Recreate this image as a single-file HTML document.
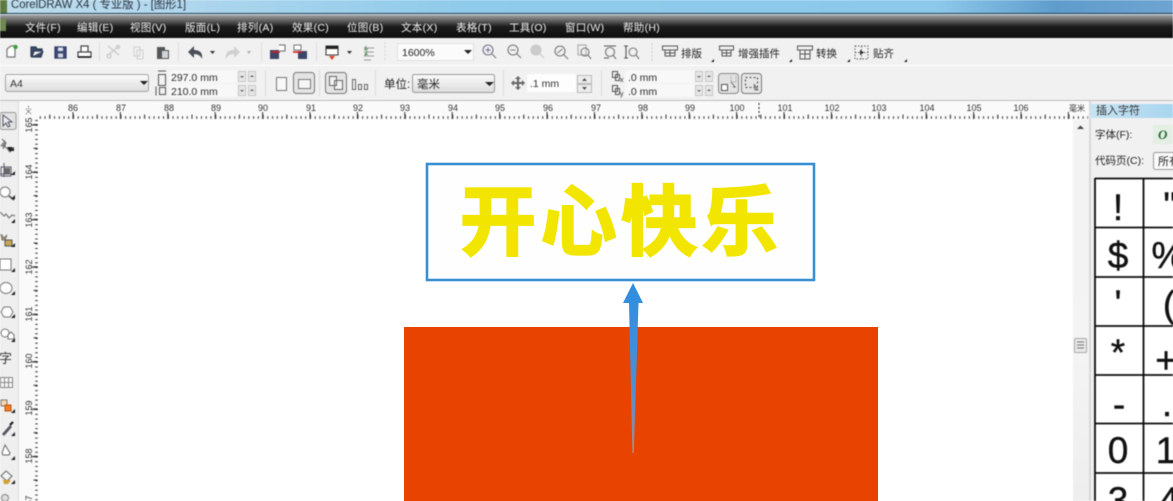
<!DOCTYPE html>
<html lang="zh"><head><meta charset="utf-8"><title>CorelDRAW X4</title>
<style>
html,body{margin:0;padding:0;width:1173px;height:501px;overflow:hidden;background:#fff}
svg{display:block}
text{font-family:"Liberation Sans","Noto Sans CJK SC",sans-serif}
.m{font-size:10.500px;letter-spacing:.3px;fill:#f0f0f0}
.t{font-size:11.500px;fill:#222}
.r{font-size:9px;fill:#333;text-anchor:middle}
.g{font-size:37px;fill:#111;text-anchor:middle;stroke:#111;stroke-width:.4px}
.chrome{filter:blur(.4px)}
</style></head><body>
<svg width="1173" height="501" viewBox="0 0 1173 501" xmlns="http://www.w3.org/2000/svg">
<defs>
<linearGradient id="title" x1="0" x2="1" y1="0" y2="0"><stop offset="0" stop-color="#bcdcea"/><stop offset=".12" stop-color="#b4d8ee"/><stop offset=".4" stop-color="#8fcbea"/><stop offset=".8" stop-color="#8cc8ea"/><stop offset=".9" stop-color="#5f9ccc"/><stop offset="1" stop-color="#6ea4d2"/></linearGradient>
<linearGradient id="menu" x1="0" x2="0" y1="0" y2="1"><stop offset="0" stop-color="#a2a2a2"/><stop offset=".5" stop-color="#1c1c1c"/><stop offset="1" stop-color="#0e0e0e"/></linearGradient>
<linearGradient id="combo" x1="0" x2="0" y1="0" y2="1"><stop offset="0" stop-color="#fbfbfb"/><stop offset=".5" stop-color="#ececec"/><stop offset="1" stop-color="#dcdcdc"/></linearGradient>
<linearGradient id="dock" x1="0" x2="1" y1="0" y2="0"><stop offset="0" stop-color="#c8e4f2"/><stop offset="1" stop-color="#a8d6f0"/></linearGradient>
<linearGradient id="arrow" x1="0" x2="0" y1="0" y2="1"><stop offset="0" stop-color="#2f8ee0"/><stop offset=".6" stop-color="#4a8fd8"/><stop offset="1" stop-color="#b08a80"/></linearGradient>
<linearGradient id="sb" x1="0" x2="0" y1="0" y2="1"><stop offset="0" stop-color="#f3f3f3"/><stop offset=".62" stop-color="#f4f4f4"/><stop offset="1" stop-color="#eeeeee"/></linearGradient>
</defs>

<rect width="1173" height="501" fill="#fff"/>

<g class="chrome">
<!-- title bar -->
<rect width="1173" height="13" fill="url(#title)"/>
<rect x="0" y="0" width="7" height="13" fill="#5e7a3e"/>
<text x="11" y="8" font-size="12" fill="#2a3440" textLength="175" lengthAdjust="spacingAndGlyphs">CorelDRAW X4 ( 专业版 ) - [图形1]</text>
<rect y="13" width="1173" height="1" fill="#22384a"/>
<rect y="14" width="1173" height="1" fill="#cfe4f0"/>

<!-- menu -->
<rect y="15" width="1173" height="23" fill="url(#menu)"/>
<rect x="0" y="19" width="6" height="12" fill="#6e8a50"/>
<text class="m" x="25" y="31">文件(F)</text>
<text class="m" x="77" y="31">编辑(E)</text>
<text class="m" x="130" y="31">视图(V)</text>
<text class="m" x="185" y="31">版面(L)</text>
<text class="m" x="237" y="31">排列(A)</text>
<text class="m" x="292" y="31">效果(C)</text>
<text class="m" x="347" y="31">位图(B)</text>
<text class="m" x="401" y="31">文本(X)</text>
<text class="m" x="456" y="31">表格(T)</text>
<text class="m" x="509" y="31">工具(O)</text>
<text class="m" x="565" y="31">窗口(W)</text>
<text class="m" x="623" y="31">帮助(H)</text>

<!-- toolbars -->
<rect y="38" width="1173" height="27" fill="#f1f1f1"/>
<rect y="65" width="1173" height="1" fill="#ffffff"/>
<rect y="66" width="1173" height="34" fill="#f1f1f1"/>
<rect y="100" width="1173" height="1" fill="#bdbdbd"/>

<!-- toolbar 1 icons -->
<g fill="none" stroke="#555" stroke-width="1.200">
<path d="M7 57V49l4-3h4v11z" fill="#fff" stroke="#777"/><circle cx="15.500" cy="47" r="2.200" fill="#3aa03a" stroke="none"/>
<path d="M31 57V47h5l1 2h5v2H34l-2 6h9l2-6" fill="#3a4a68" stroke="#2d3a55"/>
<path d="M55 47h11v11H55z" fill="#3d4a78" stroke="#2b3560"/><rect x="58" y="47.500" width="5" height="3.500" fill="#dfe3ee" stroke="none"/><rect x="58" y="53.500" width="5" height="4" fill="#cfd3df" stroke="none"/>
<path d="M81 46h7v6h-7zM78 52h13v5H78z" fill="#fff" stroke="#444"/><path d="M78 57h13" stroke="#111" stroke-width="1.500"/>
</g>
<rect x="99" y="42" width="1" height="19" fill="#dedede"/>
<g fill="none" stroke="#d0d0d0" stroke-width="1.600">
<path d="M108 46l11 9M119 46l-11 9"/><circle cx="109" cy="56" r="2"/><circle cx="118" cy="47" r="1.500"/>
<path d="M134 47h6v9h-6zM137 50h6v9h-6z" stroke-width="1"/>
</g>
<path d="M157 47h8v3h4v9h-12z" fill="#555"/><rect x="162" y="51" width="6" height="7" fill="#cfd5dd"/>
<rect x="178" y="42" width="1" height="19" fill="#dedede"/>
<path d="M188 52l6-6v4c6 0 9 3 8 9-1-3-4-5-8-5v4z" fill="#4a4f58"/>
<path d="M210 51h5l-2.500 3z" fill="#333"/>
<path d="M240 52l-6-6v4c-6 0-9 3-8 9 1-3 4-5 8-5v4z" fill="#d0d0d0"/>
<path d="M247 51h4l-2 3z" fill="#aaa"/>
<rect x="261" y="42" width="1" height="19" fill="#dedede"/>
<g>
<rect x="270" y="50" width="9" height="9" fill="#3c4668"/><path d="M272 52h8" stroke="#d02020" stroke-width="1.600"/><path d="M279 45h6v6h-5" fill="#fff" stroke="#666"/>
<path d="M294 45h7v5h-7z" fill="#fff" stroke="#777"/><rect x="298" y="51" width="9" height="8" fill="#3c4668"/><path d="M293 52h9" stroke="#d02020" stroke-width="1.600"/>
</g>
<rect x="316" y="42" width="1" height="19" fill="#dedede"/>
<rect x="326" y="46" width="12" height="9" fill="#fff" stroke="#333"/><rect x="326" y="46" width="12" height="3" fill="#222"/><path d="M329 56h6l-3 4z" fill="#e04020"/>
<path d="M347 51h5l-2.500 3z" fill="#333"/>
<path d="M364 48h10M364 52h10M364 56h10M364 60h7" stroke="#9a9a9a" stroke-width="1"/><path d="M366 46l-1 4 3-1M367 51l-2 4 3-1" stroke="#4c8a4c" fill="none"/>
<path d="M385 42v19" stroke="#d4d4d4" stroke-dasharray="2 2"/>

<!-- zoom combo -->
<rect x="397.500" y="43.500" width="76" height="17" fill="#fbfbfb" stroke="#e0e0e0"/>
<text class="t" x="402" y="56" style="font-size:10.500px">1600%</text>
<path d="M464 50h8l-4 4z" fill="#222"/>
<g fill="none" stroke="#777" stroke-width="1.100">
<circle cx="488" cy="50" r="5" fill="#eef"/><path d="M492 54l4 4M485.500 50h5M488 47.500v5"/>
<circle cx="513" cy="50" r="5"/><path d="M517 54l4 4M510.500 50h5"/>
<circle cx="536" cy="50" r="5" fill="#ccc" stroke="#c8c8c8"/><path d="M540 54l4 4" stroke="#c8c8c8"/>
<circle cx="560" cy="51" r="5"/><path d="M564 55l4 4M557.500 53l5-4"/>
<rect x="578" y="45" width="8" height="10" stroke="#aaa"/><circle cx="585" cy="52" r="4"/><path d="M588 55l3 4"/>
<path d="M604 46h12M604 58h5" stroke="#555"/><circle cx="610" cy="52" r="4.500"/><path d="M613 55l3 4"/>
<path d="M626 46v12M624 46h4M624 58h4" stroke="#555"/><circle cx="633" cy="52" r="4"/><path d="M636 55l3 4"/>
</g>
<path d="M652 43v18" stroke="#c8c8c8" stroke-dasharray="2 2"/>
<g fill="none" stroke="#555" stroke-width="1">
<path d="M662.500 46h15v4h-15zM665 50v6h10v-6M665 53h10M670 50v6"/>
<path d="M719.500 46h14v4h-14zM722 50v6h9v-6M722 53h9M726.500 50v6"/>
<path d="M797.500 46h15v4h-15zM800 50v9h10v-9M800 54h10M805 50v9"/>
</g>
<g fill="none" stroke="#666" stroke-width="1" stroke-dasharray="1.500 1.500"><path d="M855 46h13v13h-13zM855 52.500h13M861.500 46v13"/></g>
<path d="M860 50l4 2.500-4 2.500z" fill="#222"/>
<text class="t" x="681" y="57" style="font-size:10.500px">排版</text>
<text class="t" x="738" y="57" style="font-size:10.500px">增强插件</text>
<text class="t" x="816" y="57" style="font-size:10.500px">转换</text>
<text class="t" x="873" y="57" style="font-size:10.500px">贴齐</text>
<path d="M711 62h3v-3zM789 62h3v-3zM847 62h3v-3zM904 62h3v-3z" fill="#222"/>

<!-- toolbar 2 -->
<rect x="5.500" y="74.500" width="143" height="17" rx="2" fill="url(#combo)" stroke="#a5a5a5"/>
<text x="10" y="87" font-size="10.500" fill="#333">A4</text>
<path d="M140 81h8l-4 4z" fill="#222"/>
<rect x="169" y="70" width="68" height="13" fill="#f8f8f8"/><rect x="169" y="84" width="68" height="13" fill="#f8f8f8"/>
<g fill="none" stroke="#555"><path d="M158.500 74.500h7v11h-7zM158 71h8"/><path d="M159.500 87.500h6v7h-6zM156 86.500v9"/></g>
<text x="171" y="81" font-size="10.500" fill="#2a2a2a">297.0 mm</text>
<text x="171" y="95" font-size="10.500" fill="#2a2a2a">210.0 mm</text>
<g fill="#e6e6e6" stroke="#c8c8c8">
<rect x="238.500" y="71.500" width="7" height="10"/><rect x="248.500" y="71.500" width="7" height="10"/>
<rect x="238.500" y="85.500" width="7" height="10"/><rect x="248.500" y="85.500" width="7" height="10"/>
<rect x="695.500" y="71.500" width="7" height="10"/><rect x="705.500" y="71.500" width="7" height="10"/>
<rect x="695.500" y="85.500" width="7" height="10"/><rect x="705.500" y="85.500" width="7" height="10"/>
</g>
<path d="M240 76h4l-2 2zM250 77h4l-2-2zM240 90h4l-2 2zM250 91h4l-2-2zM697 76h4l-2 2zM707 77h4l-2-2zM697 90h4l-2 2zM707 91h4l-2-2z" fill="#666"/>
<rect x="265" y="70" width="1" height="26" fill="#dcdcdc"/>
<rect x="276.500" y="77.500" width="10" height="13" fill="#f8f8f8" stroke="#777"/>
<rect x="293.500" y="72.500" width="21" height="21" rx="3" fill="#e4e4e4" stroke="#777"/>
<rect x="298.500" y="79.500" width="12" height="9" fill="#f6f6f6" stroke="#777"/>
<rect x="319" y="70" width="1" height="26" fill="#dcdcdc"/>
<rect x="325.500" y="72.500" width="21" height="21" rx="3" fill="#e4e4e4" stroke="#777"/>
<path d="M329.500 76.500h7v9h-7zM334.500 80.500h8v9h-8z" fill="#f4f4f4" stroke="#666"/>
<path d="M352.500 79.500h3v10h-3zM358.500 84.500h3v5h-3zM364.500 84.500h3v5h-3z" fill="#f4f4f4" stroke="#666"/>
<rect x="375" y="70" width="1" height="26" fill="#dcdcdc"/>
<text x="384" y="88" font-size="11.500" fill="#222">单位:</text>
<rect x="412.500" y="74.500" width="82" height="18" rx="2" fill="url(#combo)" stroke="#999"/>
<text x="417" y="88" font-size="11.500" fill="#222">毫米</text>
<path d="M485 82h9l-4.500 4z" fill="#222"/>
<rect x="503" y="70" width="1" height="26" fill="#dcdcdc"/>
<path d="M518 77l3 3h-2v3h3v-2l3 3-3 3v-2h-3v3h2l-3 3-3-3h2v-3h-3v2l-3-3 3-3v2h3v-3h-2z" fill="#666" transform="translate(0 -1)"/>
<rect x="527" y="74" width="49" height="18" fill="#fdfdfd"/>
<text x="530" y="87" font-size="10.500" fill="#333">.1 mm</text>
<rect x="577.500" y="75.500" width="14" height="8" fill="#ededed" stroke="#bbb"/><rect x="577.500" y="84.500" width="14" height="8" fill="#ededed" stroke="#bbb"/>
<path d="M582 81h5l-2.500-3zM582 87h5l-2.500 3z" fill="#555"/>
<rect x="601" y="70" width="1" height="26" fill="#dcdcdc"/>
<rect x="625" y="70" width="70" height="13" fill="#f8f8f8"/><rect x="625" y="84" width="70" height="13" fill="#f8f8f8"/>
<g fill="none" stroke="#555"><path d="M612.500 71.500h5v6h-5zM615.500 74.500h4v6h-4zM612.500 85.500h5v6h-5zM615.500 88.500h4v6h-4z"/></g>
<text x="620" y="82" font-size="7" fill="#333">x</text><text x="620" y="96" font-size="7" fill="#333">y</text>
<text x="628" y="81" font-size="10.500" fill="#2a2a2a">.0 mm</text>
<text x="628" y="95" font-size="10.500" fill="#2a2a2a">.0 mm</text>
<rect x="718.500" y="73.500" width="20" height="20" rx="3" fill="#e2e2e2" stroke="#888"/>
<path d="M721.500 84.500h6v6h-6z" fill="#fff" stroke="#555"/><path d="M731 76v6h5v-6" fill="none" stroke="#999" stroke-dasharray="1 1"/><path d="M731 82l4 5-2 0" fill="#fff" stroke="#666"/>
<rect x="741.500" y="73.500" width="20" height="20" rx="3" fill="#e6e6e6" stroke="#777"/>
<path d="M745.500 77.500h12v10h-12z" fill="none" stroke="#444" stroke-dasharray="2 2"/><path d="M754 84l4 6-3 0z" fill="#aaa" stroke="#777"/>

<!-- left toolbar -->
<rect y="101" width="18" height="400" fill="#efefef"/>
<rect x="18" y="101" width="1" height="400" fill="#dcdcdc"/>
<rect x="0" y="112.500" width="16" height="17" rx="2" fill="#e2e2e2" stroke="#9a9a9a"/>
<path d="M3 115l0 11 3-3 2 4 2-1-2-4 4 0z" fill="#e8eef4" stroke="#556"/>
<path d="M0 146l5-6 1 8zM5 147l8 2-3 4z" fill="#888"/><path d="M7 147h6l-3 5z" fill="#222"/><path d="M2 139l4 4-3 6" fill="none" stroke="#666"/>
<path d="M1 167h10v9H1zM4 163v14M0 174h12" fill="none" stroke="#556"/><path d="M4 168h6v6H4z" fill="#666"/>
<circle cx="5" cy="192" r="5" fill="#fff" stroke="#777"/><path d="M9 196l5 4" stroke="#444" stroke-width="1.500"/>
<path d="M0 212l4 4 2-2 3 4 3-3 3 1" fill="none" stroke="#777" stroke-width="1.200"/>
<path d="M1 234l3 4 3-3-2 5h-3z" fill="#c99050" stroke="#777"/><rect x="5" y="240" width="7" height="6" fill="#c8a850" stroke="#555"/>
<rect x="0" y="259" width="11" height="11" fill="#fff" stroke="#777"/>
<ellipse cx="6" cy="288" rx="6" ry="5.500" fill="#fff" stroke="#777"/>
<path d="M1 312l3-5h6l3 5-3 5H4z" fill="#fff" stroke="#777"/>
<circle cx="5" cy="333" r="4" fill="#fff" stroke="#777"/><path d="M8 335l3-3 3 3v4H8z" fill="#fff" stroke="#777"/>
<text x="-1" y="363" font-size="13" fill="#333">字</text>
<path d="M0.500 377.500h12v10H0.500zM0.500 382.500h12M4.500 377.500v10M8.500 377.500v10" fill="#f8f8f8" stroke="#888"/>
<rect x="1" y="400" width="6" height="6" fill="#f7d9a8" stroke="#777"/><rect x="5" y="405" width="6" height="6" fill="#f08020" stroke="#c05010"/>
<path d="M2 434l8-9 2 2-8 9z" fill="#556"/><path d="M10 425l3-3" stroke="#111" stroke-width="2"/>
<path d="M5 445l-3 8 1 2h6l1-2z" fill="#fff" stroke="#666"/>
<path d="M1 476l5-5 6 5-5 5z" fill="#f4f4f4" stroke="#666"/><path d="M3 480h8l-3 4H4z" fill="#d2a030"/>
<circle cx="5" cy="498" r="3.500" fill="#ddd" stroke="#888"/>
<path d="M10 151h4v-4zM11 175h4v-4zM11 199h4v-4zM11 223h4v-4zM11 247h4v-4zM11 272h4v-4zM11 295h4v-4zM11 318h4v-4zM11 342h4v-4zM11 413h4v-4zM11 436h4v-4zM11 460h4v-4zM11 484h4v-4z" fill="#222"/>

<!-- rulers -->
<rect x="19" y="101" width="1070" height="19" fill="#fafafa"/>
<rect x="19" y="101" width="19" height="400" fill="#fafafa"/>
<path d="M39.800 117.500H1088" stroke="#333" stroke-width="2.500" stroke-dasharray="1 3.740"/>
<path d="M49.300 116.500H1088" stroke="#333" stroke-width="4" stroke-dasharray="1 22.700"/>
<path d="M73 112v7M120.400 112v7M167.800 112v7M215.200 112v7M262.600 112v7M310 112v7M357.400 112v7M404.800 112v7M452.200 112v7M499.600 112v7M547 112v7M594.400 112v7M641.800 112v7M689.200 112v7M736.600 112v7M784 112v7M831.400 112v7M878.800 112v7M926.200 112v7M973.600 112v7M1021 112v7M1068.400 112v7" stroke="#333"/>
<path d="M759 103v16" stroke="#222" stroke-dasharray="2 2"/>
<path d="M36.500 120V501" stroke="#333" stroke-width="2.500" stroke-dasharray="1 3.740"/>
<path d="M35.500 124V501" stroke="#333" stroke-width="4" stroke-dasharray="1 22.700"/>
<path d="M31 125h7M31 172.400h7M31 219.800h7M31 267.200h7M31 314.600h7M31 362h7M31 409.400h7M31 456.800h7" stroke="#333"/>
<path d="M26 109l5 5M31 109l-5 5M28.500 106v3" stroke="#555" stroke-dasharray="1 1" fill="none"/>
<g>
<text class="r" x="73" y="111">86</text><text class="r" x="121" y="111">87</text><text class="r" x="169" y="111">88</text><text class="r" x="216" y="111">89</text><text class="r" x="263" y="111">90</text><text class="r" x="311" y="111">91</text><text class="r" x="358" y="111">92</text><text class="r" x="405" y="111">93</text><text class="r" x="453" y="111">94</text><text class="r" x="500" y="111">95</text><text class="r" x="548" y="111">96</text><text class="r" x="596" y="111">97</text><text class="r" x="643" y="111">98</text><text class="r" x="690" y="111">99</text><text class="r" x="737" y="111">100</text><text class="r" x="785" y="111">101</text><text class="r" x="832" y="111">102</text><text class="r" x="879" y="111">103</text><text class="r" x="927" y="111">104</text><text class="r" x="974" y="111">105</text><text class="r" x="1021" y="111">106</text><text class="r" x="1077" y="111" style="font-size:8px">毫米</text>
</g>
<g>
<text class="r" transform="translate(32 125) rotate(-90)">165</text>
<text class="r" transform="translate(32 172) rotate(-90)">164</text>
<text class="r" transform="translate(32 220) rotate(-90)">163</text>
<text class="r" transform="translate(32 267) rotate(-90)">162</text>
<text class="r" transform="translate(32 314) rotate(-90)">161</text>
<text class="r" transform="translate(32 361) rotate(-90)">160</text>
<text class="r" transform="translate(32 408) rotate(-90)">159</text>
<text class="r" transform="translate(32 456) rotate(-90)">158</text>
<text class="r" transform="translate(32 503) rotate(-90)">157</text>
</g>

<!-- scrollbar -->
<rect x="1073" y="120" width="17" height="381" fill="url(#sb)"/>
<path d="M1077 129h7l-3.500-3.500z" fill="#444"/>
<rect x="1074.500" y="338.500" width="12" height="14" rx="1" fill="#e8e8e8" stroke="#aaa"/>
<path d="M1077 342h7M1077 345h7M1077 348h7" stroke="#777"/>
<rect x="1089" y="101" width="2" height="400" fill="#d8d8d8"/>

<!-- docker -->
<rect x="1091" y="101" width="82" height="400" fill="#f1f1f1"/>
<rect x="1090" y="104" width="83" height="14" fill="url(#dock)"/>
<text x="1096" y="114" font-size="11" fill="#333">插入字符</text>
<text x="1095" y="138" font-size="10.500" fill="#222">字体(F):</text>
<rect x="1153" y="125" width="20" height="19" fill="#e4efe4"/>
<text x="1158" y="139" font-size="13" font-style="italic" font-weight="bold" fill="#2a6a3a" style="font-family:'Liberation Serif',serif">O</text>
<text x="1095" y="164" font-size="10.500" fill="#222">代码页(C):</text>
<rect x="1153.500" y="152.500" width="24" height="17" rx="2" fill="#fafafa" stroke="#999"/>
<text x="1158" y="165" font-size="11" fill="#222">所有</text>
<rect x="1095" y="179" width="78" height="322" fill="#fff"/>
<path d="M1095 178V501M1143.500 178V501M1095 178.500H1173M1095 227.500H1173M1095 277H1173M1095 326H1173M1095 375H1173M1095 423.500H1173M1095 473H1173" stroke="#0c0c0c" stroke-width="1.800" fill="none"/>
<g>
<text class="g" x="1118" y="220">!</text><text class="g" x="1170" y="218">"</text>
<text class="g" x="1118" y="268">$</text><text class="g" x="1168" y="268">%</text>
<text class="g" x="1118" y="316">'</text><text class="g" x="1169" y="317">(</text>
<text class="g" x="1118" y="365">*</text><text class="g" x="1166" y="373">+</text>
<text class="g" x="1119" y="417">-</text><text class="g" x="1167" y="416">.</text>
<text class="g" x="1118" y="463">0</text><text class="g" x="1166" y="463">1</text>
<text class="g" x="1118" y="513">3</text><text class="g" x="1169" y="513">4</text>
</g>
</g>

<!-- artwork -->
<rect x="427" y="164" width="387" height="116" fill="#fefefe" stroke="#3a8fd2" stroke-width="2.600"/>
<text x="460" y="249" font-size="76" font-weight="700" letter-spacing="4.600" fill="#f2e600" stroke="#f2e600" stroke-width="2.200" stroke-linejoin="miter" style="font-family:'Noto Sans CJK SC',sans-serif">开心快乐</text>
<rect x="404" y="327" width="474" height="174" fill="#e84400"/>
<path d="M633 283L643 303H638.500L633.800 453H632.400L629 303H623z" fill="url(#arrow)"/>
</svg>
</body></html>
